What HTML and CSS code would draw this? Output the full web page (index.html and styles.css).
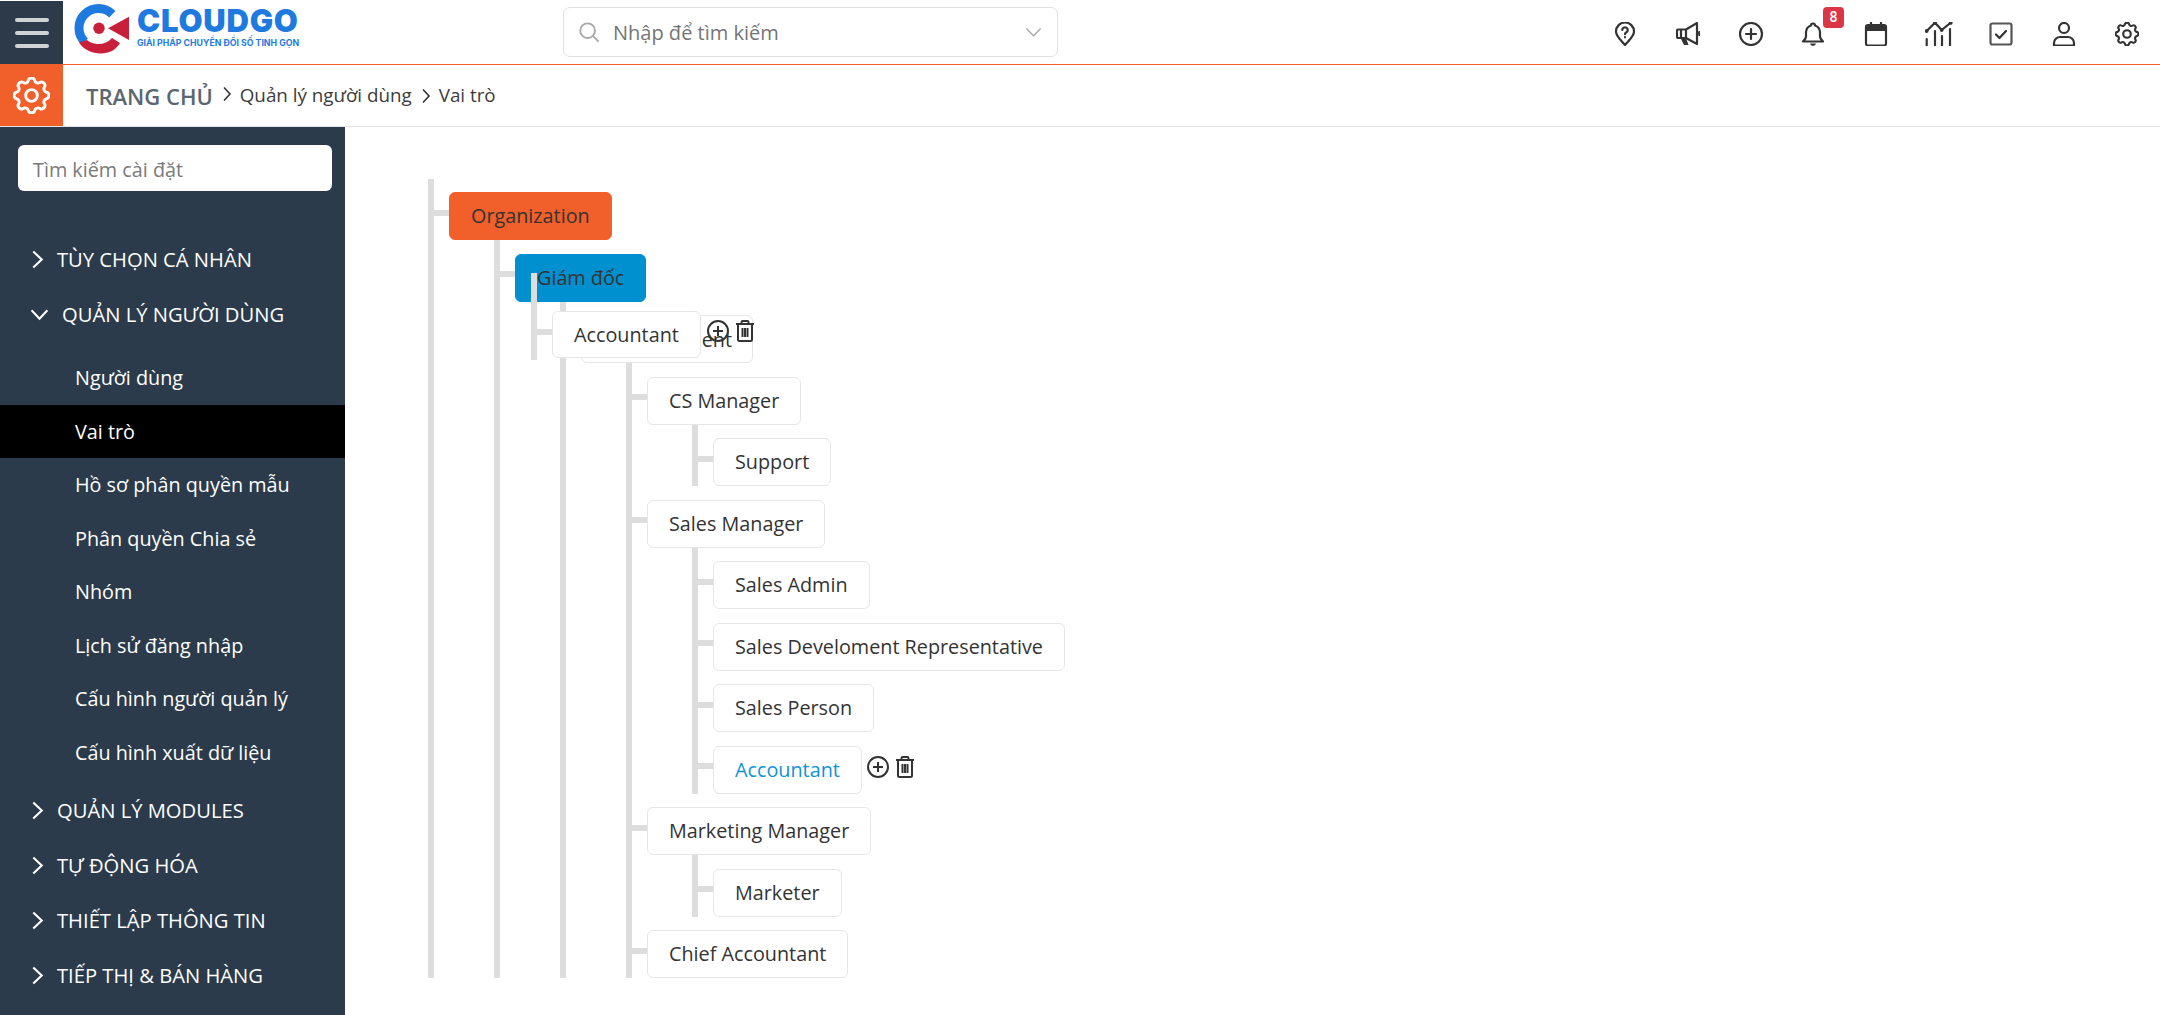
FILE: index.html
```html
<!DOCTYPE html>
<html lang="vi">
<head>
<meta charset="utf-8">
<title>Vai trò</title>
<link rel="stylesheet" href="styles.css">
</head>
<body>
<svg class="sprite" aria-hidden="true">
  <symbol id="i-gear" viewBox="2.500 2.500 19 19"><path d="M10.325 4.317c.426-1.756 2.924-1.756 3.35 0a1.724 1.724 0 0 0 2.573 1.066c1.543-.94 3.31.826 2.37 2.37a1.724 1.724 0 0 0 1.065 2.572c1.756.426 1.756 2.924 0 3.35a1.724 1.724 0 0 0-1.066 2.573c.94 1.543-.826 3.31-2.37 2.37a1.724 1.724 0 0 0-2.572 1.065c-.426 1.756-2.924 1.756-3.35 0a1.724 1.724 0 0 0-2.573-1.066c-1.543.94-3.31-.826-2.37-2.37a1.724 1.724 0 0 0-1.065-2.572c-1.756-.426-1.756-2.924 0-3.35a1.724 1.724 0 0 0 1.066-2.573c-.94-1.543.826-3.31 2.37-2.37 1 .608 2.296.07 2.572-1.065z"/><circle cx="12" cy="12" r="3"/></symbol>
  <symbol id="i-plus" viewBox="0 0 24 24"><circle cx="12" cy="12" r="10"/><path d="M12 7v10M7 12h10"/></symbol>
  <symbol id="i-trash" viewBox="0 0 24 24"><path d="M3 5h18M8.500 5V3.200c0-.7.500-1.200 1.200-1.200h4.600c.7 0 1.200.5 1.200 1.200V5M5 5v15.500c0 1 .7 1.500 1.500 1.500h11c.8 0 1.500-.5 1.500-1.500V5M9.500 9v9M12 9v9M14.500 9v9"/></symbol>
</svg>

<header class="topbar">
  <button class="burger" aria-label="Menu"><span></span><span></span><span></span></button>
  <div class="logo">
    <svg class="logo-mark" viewBox="0 0 56 51" aria-hidden="true">
      <path class="logo-blue" d="M38.300 11.200A19.500 19.500 0 1 0 10.700 38.800" />
      <path class="logo-fill-red" d="M5 39.500C10 47 18 50.500 27 50.500c8 0 15-3.500 19-10.500l-8-5c-4 4.500-9.500 6.500-15 6-4-.3-7-1.500-10-4z"/>
      <circle class="logo-fill-red" cx="25" cy="25.300" r="5.700"/>
      <path class="logo-fill-red" d="M34 25.300 55 13.700V37z"/>
    </svg>
    <div class="logo-text">
      <strong>CLOUDGO</strong>
      <small>GIẢI PHÁP CHUYỂN ĐỔI SỐ TINH GỌN</small>
    </div>
  </div>
  <div class="global-search">
    <svg class="gs-icon" viewBox="0 0 24 24" aria-hidden="true"><circle cx="10.500" cy="10.500" r="8"/><path d="m16.500 16.500 6 6"/></svg>
    <span class="gs-text">Nhập để tìm kiếm</span>
    <svg class="gs-caret" viewBox="0 0 24 24" aria-hidden="true"><path d="m3 7 9 9 9-9"/></svg>
  </div>
  <nav class="tools">
    <a class="tool"><svg viewBox="0 0 24 24"><path d="M12 23C8 18 3 14.500 3 9.500a9 9 0 0 1 18 0C21 14.500 16 18 12 23z"/><path d="M9.300 8a2.700 2.700 0 1 1 4.100 2.300c-.9.500-1.400 1-1.400 1.900M12 15v.3"/></svg></a>
    <a class="tool"><svg viewBox="0 0 24 24"><path d="M2 7.500h8V16H2c-.6 0-1-.4-1-1V8.500c0-.6.400-1 1-1zM5 7.500V16M10 7.500 21 1v21L10 16M23.300 10v3"/><path class="solid" d="M4.500 16h5.500l2.500 7H8z"/></svg></a>
    <a class="tool"><svg viewBox="0 0 24 24"><circle cx="12" cy="12" r="11"/><path d="M12 7v10M7 12h10"/></svg></a>
    <a class="tool"><svg viewBox="0 0 24 24"><path d="M10 3.500a2 2 0 1 1 4 0 7.500 7.500 0 0 1 5 6.500v4.500c0 2 1.500 3.500 3 5H2c1.500-1.500 3-3 3-5V10a7.500 7.500 0 0 1 5-6.500z"/><path class="solid" d="M9 21.500h6c-.5 1.500-1.500 2.300-3 2.300s-2.500-.8-3-2.300z"/></svg><b class="badge">8</b></a>
    <a class="tool"><svg viewBox="0 0 24 24"><rect x="2" y="3" width="20" height="20.500" rx="2"/><path class="solid" d="M2 3h20v6H2z"/><path d="M7 .5V4M17 .5V4"/></svg></a>
    <a class="tool tool-wide"><svg viewBox="0 0 28 24"><path d="m1.700 9 8.300-8.300 6.700 7.300 9-7.300"/><circle class="solid" cx="1.700" cy="9" r="1.900"/><circle class="solid" cx="10" cy=".9" r="1.900"/><circle class="solid" cx="16.700" cy="8" r="1.900"/><circle class="solid" cx="25.700" cy=".9" r="1.900"/><path d="M1.700 17v7M10 9v15M17 14v10M25 7v17"/></svg></a>
    <a class="tool"><svg viewBox="0 0 24 24"><rect class="soft" x="1.500" y="1.500" width="21" height="21" rx="2"/><path d="m7 12.500 3.500 3.500 6.500-7"/></svg></a>
    <a class="tool"><svg viewBox="0 0 24 24"><circle cx="12" cy="6" r="5"/><path d="M2 23.500v-2.500c0-3.500 3-6 6-6h8c3 0 6 2.500 6 6v2.500z"/></svg></a>
    <a class="tool tool-gear"><svg viewBox="0 0 24 24"><use href="#i-gear"/></svg></a>
  </nav>
</header>

<div class="crumbbar">
  <div class="crumb-tile"><svg viewBox="0 0 24 24"><use href="#i-gear"/></svg></div>
  <span class="crumb-home">TRANG CHỦ</span>
  <svg class="crumb-sep" viewBox="0 0 10 16"><path d="m2 1.500 6 6.500-6 6.500"/></svg>
  <span class="crumb">Quản lý người dùng</span>
  <svg class="crumb-sep low" viewBox="0 0 10 16"><path d="m2 1.500 6 6.500-6 6.500"/></svg>
  <span class="crumb">Vai trò</span>
</div>

<div class="body-row">
  <aside class="sidebar">
    <div class="side-search">Tìm kiếm cài đặt</div>
    <ul class="menu">
      <li class="menu-head"><svg class="chev" viewBox="0 0 12 18"><path d="m2 1.500 8 7.500-8 7.500"/></svg>TÙY CHỌN CÁ NHÂN</li>
      <li class="menu-head open"><svg class="chev-down" viewBox="0 0 18 12"><path d="m1.500 2 7.500 8 7.500-8"/></svg>QUẢN LÝ NGƯỜI DÙNG</li>
      <li class="sub first">Người dùng</li>
      <li class="sub active">Vai trò</li>
      <li class="sub">Hồ sơ phân quyền mẫu</li>
      <li class="sub">Phân quyền Chia sẻ</li>
      <li class="sub">Nhóm</li>
      <li class="sub">Lịch sử đăng nhập</li>
      <li class="sub">Cấu hình người quản lý</li>
      <li class="sub last">Cấu hình xuất dữ liệu</li>
      <li class="menu-head"><svg class="chev" viewBox="0 0 12 18"><path d="m2 1.500 8 7.500-8 7.500"/></svg>QUẢN LÝ MODULES</li>
      <li class="menu-head"><svg class="chev" viewBox="0 0 12 18"><path d="m2 1.500 8 7.500-8 7.500"/></svg>TỰ ĐỘNG HÓA</li>
      <li class="menu-head"><svg class="chev" viewBox="0 0 12 18"><path d="m2 1.500 8 7.500-8 7.500"/></svg>THIẾT LẬP THÔNG TIN</li>
      <li class="menu-head"><svg class="chev" viewBox="0 0 12 18"><path d="m2 1.500 8 7.500-8 7.500"/></svg>TIẾP THỊ &amp; BÁN HÀNG</li>
    </ul>
  </aside>

  <main class="content">
    <ul class="tree root">
      <li><span class="node org">Organization</span>
        <ul class="tree"><li><span class="node dir">Giám đốc</span>
          <ul class="tree"><li class="dept"><span class="node">Department</span>
            <span class="actions over"><svg viewBox="0 0 24 24"><use href="#i-plus"/></svg><svg viewBox="0 0 24 24"><use href="#i-trash"/></svg></span>
            <span class="ghost"><span class="node">Accountant</span></span>
            <ul class="tree">
              <li><span class="node">CS Manager</span>
                <ul class="tree"><li><span class="node">Support</span></li></ul>
              </li>
              <li><span class="node">Sales Manager</span>
                <ul class="tree">
                  <li><span class="node">Sales Admin</span></li>
                  <li><span class="node">Sales Develoment Representative</span></li>
                  <li><span class="node">Sales Person</span></li>
                  <li><span class="node current">Accountant</span><span class="actions"><svg viewBox="0 0 24 24"><use href="#i-plus"/></svg><svg viewBox="0 0 24 24"><use href="#i-trash"/></svg></span></li>
                </ul>
              </li>
              <li><span class="node">Marketing Manager</span>
                <ul class="tree"><li><span class="node">Marketer</span></li></ul>
              </li>
              <li><span class="node">Chief Accountant</span></li>
            </ul>
          </li></ul>
        </li></ul>
      </li>
    </ul>
  </main>
</div>
</body>
</html>
```
FILE: styles.css
```css
* { box-sizing: border-box; }
html, body { margin: 0; padding: 0; height: 100%; overflow: hidden; }
body { font-family: "Open Sans", "Noto Sans", sans-serif; color: #333; background: #fff; }
.sprite { display: none; }

.topbar { height: 65px; display: flex; align-items: flex-start; border-bottom: 1.5px solid #f15f2a; background: #fff; }
.burger { width: 63px; height: 63px; margin-top: 1px; border: 0; background: #2c3a4a; display: flex; flex-direction: column; justify-content: center; align-items: center; gap: 9px; padding: 0; flex: none; }
.burger span { display: block; width: 34px; height: 4px; border-radius: 2px; background: #cfd3d6; }
.logo { display: flex; margin-left: 11px; margin-top: 3px; width: 226px; flex: none; }
.logo-mark { width: 56px; height: 51px; flex: none; }
.logo-blue { fill: none; stroke: #1f7ae0; stroke-width: 9; }
.logo-fill-red { fill: #c8203a; }
.logo-text { margin-left: 7px; display: flex; flex-direction: column; color: #1f7ae0; font-family: "Inter", "Liberation Sans", sans-serif; }
.logo-text strong { font-size: 31px; line-height: 31px; font-weight: 900; margin-top: 2px; letter-spacing: .8px; }
.logo-text small { font-size: 8.750px; font-weight: 700; line-height: 12px; margin-top: 1px; white-space: nowrap; }

.global-search { margin-left: 263px; margin-top: 7px; width: 495px; height: 50px; border: 1px solid #e1e1e1; border-radius: 7px; display: flex; align-items: center; padding: 0 14px; flex: none; }
.gs-icon { width: 22px; height: 22px; fill: none; stroke: #a8a8a8; stroke-width: 2; flex: none; }
.gs-text { margin-left: 13px; font-size: 20px; color: #757575; flex: 1; }
.gs-caret { width: 19px; height: 19px; fill: none; stroke: #a8a8a8; stroke-width: 1.800; flex: none; }

.tools { margin-left: auto; display: flex; padding-right: 2px; height: 64px; }
.tool { width: 62.700px; height: 64px; position: relative; display: flex; justify-content: center; padding-top: 22px; }
.tool svg { width: 24px; height: 24px; fill: none; stroke: #333; stroke-width: 2.200; stroke-linecap: round; stroke-linejoin: round; }
.tool-wide svg { width: 28px; }
.tool-gear svg { stroke-width: 1.700; }
.tool .solid { fill: #333; stroke: none; }
.tool .soft { stroke: #555; }
.badge { position: absolute; left: 41px; top: 7px; width: 21px; height: 21px; border-radius: 4px; background: #dc3545; color: #fff; font: 500 14px/21px "Roboto", sans-serif; text-align: center; }

.crumbbar { height: 62px; display: flex; align-items: center; border-bottom: 1.5px solid #e3e3e3; background: #fff; }
.crumb-tile { width: 63px; height: 61px; background: #f15f2a; display: flex; align-items: center; justify-content: center; flex: none; }
.crumb-tile svg { width: 37px; height: 37px; fill: none; stroke: #fff; stroke-width: 1.500; }
.crumb-home { margin-left: 23px; font-size: 22px; font-weight: 600; color: #5b6770; }
.crumb-sep { width: 10px; height: 16px; margin: -4px 8px 0 9px; fill: none; stroke: #333; stroke-width: 1.600; flex: none; }
.crumb-sep.low { margin-top: 0; }
.crumb { font-size: 18.800px; color: #3c3c3c; margin-top: -2px; }

.body-row { display: flex; height: calc(100vh - 127px); }
.sidebar { width: 345px; flex: none; background: #2c3b4b; color: #fff; padding-top: 18px; overflow: hidden; }
.side-search { margin: 0 13px 0 18px; height: 46px; background: #fff; border-radius: 6px; color: #7a7a7a; font-size: 19.800px; line-height: 49px; padding-left: 15px; }
.menu { list-style: none; margin: 41px 0 0; padding: 0; }
.menu-head { height: 55px; line-height: 55px; font-size: 20.200px; padding-left: 57px; position: relative; white-space: nowrap; }
.menu-head.open { padding-left: 62px; }
.chev, .chev-down { position: absolute; fill: none; stroke: #fff; stroke-width: 2; }
.chev { left: 31px; top: 18px; width: 13px; height: 19px; }
.chev-down { left: 30px; top: 21px; width: 19px; height: 13px; }
.sub { height: 53.500px; line-height: 53.500px; font-size: 19.800px; padding-left: 75px; white-space: nowrap; }
.sub.first { margin-top: 9px; }
.sub.last { margin-bottom: 4px; }
.sub.active { background: #000; }

.content { flex: 1; padding: 51.500px 0 0 83px; overflow: hidden; }
.tree { list-style: none; margin: 0 0 0 45px; padding: 0 0 0 15px; border-left: 6px solid #dddddd; }
.tree.root { margin-left: 0; }
.tree li { position: relative; padding-top: 13.500px; }
.tree li::before { content: ""; position: absolute; left: -15px; top: 31px; width: 15px; height: 6px; background: #dddddd; }
.node { display: inline-flex; align-items: center; height: 48px; padding: 0 21px 1px; border: 1.500px solid #e6e6e6; border-radius: 6px; background: #fff; font-size: 19.800px; color: #333; white-space: nowrap; vertical-align: top; }
.node.org { background: #f15f2a; border-color: #f15f2a; }
.node.dir { background: #0090d0; border-color: #0090d0; }
.node.current { color: #0f93d8; }
.actions { display: inline-flex; gap: 2.500px; margin-left: 4.500px; height: 48px; align-items: center; vertical-align: top; padding-bottom: 6px; }
.actions svg { width: 24px; height: 24px; fill: none; stroke: #333; stroke-width: 2; }
.actions.over { position: absolute; left: 125px; top: 13.500px; margin-left: 0; height: 32px; padding-bottom: 0; z-index: 2; }
.dept > .node { width: 172px; justify-content: flex-end; padding-right: 20px; padding-top: 2px; }
.ghost { position: absolute; left: -50px; top: -29px; height: 87px; width: 171px; z-index: 3; border-left: 6px solid #dddddd; padding: 38.500px 0 0 15px; }
.ghost::before { content: ""; position: absolute; left: 0; top: 56px; width: 15px; height: 6px; background: #dddddd; }
.ghost .node { height: 47px; }
```
